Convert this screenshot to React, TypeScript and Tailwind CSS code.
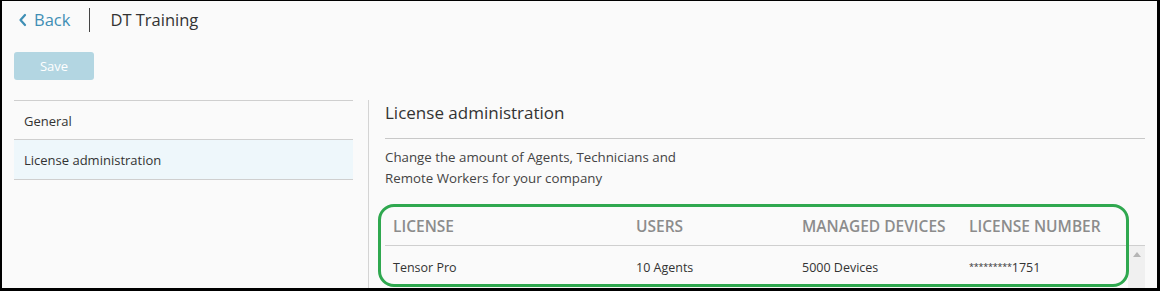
import React from "react";

export default function App() {
  const font = { fontFamily: '"Open Sans", "Noto Sans", sans-serif' };
  return (
    <div
      className="relative w-[1160px] h-[291px] overflow-hidden bg-[#fafafa] border-black border-t-[1px] border-l-[2px] border-r-[3px] border-b-[3px]"
      style={font}
    >
      {/* Header */}
      <div className="flex items-center h-[22px] mt-[8px] pl-[15px]">
        <div className="flex items-center text-[#3f8fb5]">
          <svg width="12" height="14" viewBox="0 0 12 14" className="mr-[5px]">
            <path d="M8 2 L3.5 7 L8 12" fill="none" stroke="#3f8fb5" strokeWidth="2.2" strokeLinecap="round" strokeLinejoin="round" />
          </svg>
          <span className="text-[16.5px] leading-[22px]">Back</span>
        </div>
        <div className="ml-[19px] w-px h-[24px] bg-[#444]" />
        <span className="ml-[20px] text-[16.5px] leading-[22px] text-[#333]">DT Training</span>
      </div>

      {/* Save */}
      <div className="ml-[12px] mt-[21px] w-[80px] h-[28px] rounded-[3px] bg-[#b3d6e2] flex items-center justify-center text-white text-[13px] pt-[1px]">
        Save
      </div>

      {/* Main */}
      <div className="flex mt-[20px]">
        <div className="ml-[12px] w-[339px] border-t border-[#cfcfcf] text-[13px] text-[#333]">
          <div className="h-[39px] flex items-center pl-[10px] pt-[3px] border-b border-[#cfcfcf]">General</div>
          <div className="h-[40px] flex items-center pl-[10px] pt-[2px] border-b border-[#cfcfcf] bg-[#eef7fb]">License administration</div>
        </div>
        <div className="ml-[15px] h-[200px] border-l border-[#d4d4d4] pl-[16px] w-[777px]">
          <div className="h-[39px] border-b border-[#c8c8c8] text-[17px] leading-[25px] text-[#333] w-[760px]">
            License administration
          </div>
          <div className="mt-[8px] text-[13.3px] leading-[21px] text-[#444] w-[330px]">
            Change the amount of Agents, Technicians and Remote Workers for your company
          </div>
          {/* Table */}
          <div className="mt-[17px] w-[760px]">
            <div className="flex h-[40px] items-center border-b border-[#cfcfcf] text-[15.5px] font-semibold text-[#8c8c8c] pt-[3px]">
              <div className="w-[251px] pl-[8px]">LICENSE</div>
              <div className="w-[166px]">USERS</div>
              <div className="w-[167px]">MANAGED DEVICES</div>
              <div className="flex-1">LICENSE NUMBER</div>
            </div>
            <div className="flex h-[45px] text-[12.5px] text-[#333]">
              <div className="flex flex-1 items-center">
                <div className="w-[251px] pl-[8px]">Tensor Pro</div>
                <div className="w-[166px]">10 Agents</div>
                <div className="w-[167px]">5000 Devices</div>
                <div className="flex-1 flex items-baseline">
                  <span className="text-[9px] tracking-[-0.2px] relative top-[-2px]">*********</span>
                  <span>1751</span>
                </div>
              </div>
              <div className="w-[17px] bg-[#f0f0f0] flex justify-center pt-[6px]">
                <svg width="8" height="5" viewBox="0 0 8 5">
                  <path d="M0 5 L4 0 L8 5 Z" fill="#b5b5b5" />
                </svg>
              </div>
            </div>
          </div>
        </div>
      </div>

      {/* Annotation */}
      <div className="absolute left-[376px] top-[203px] w-[751px] h-[83px] rounded-[16px] border-[3px] border-[#2fa84f]" />
    </div>
  );
}
